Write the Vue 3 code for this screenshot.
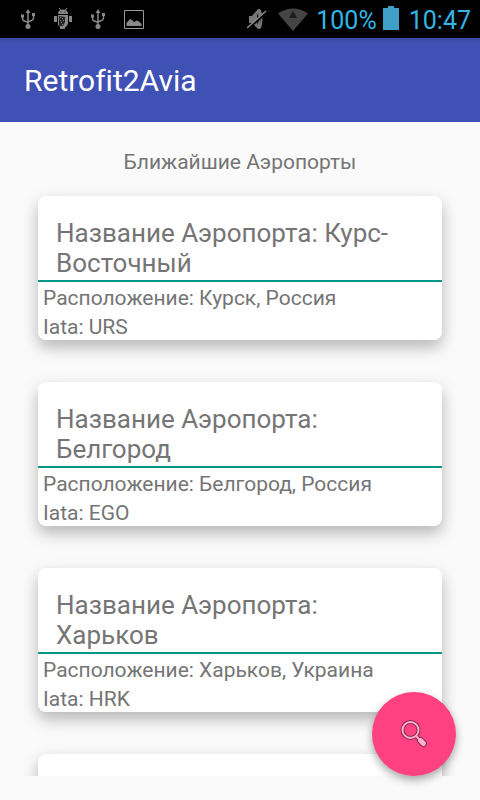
<script setup>
const airports = [
  { name: 'Курс-Восточный', place: 'Курск, Россия', iata: 'URS' },
  { name: 'Белгород', place: 'Белгород, Россия', iata: 'EGO' },
  { name: 'Харьков', place: 'Харьков, Украина', iata: 'HRK' }
]
</script>

<template>
  <div class="screen">
    <div class="status">
      <div class="notices">
        <svg v-for="n in 2" :key="n" :class="'usb-' + n" width="14" height="20" viewBox="0 0 14 20">
          <path d="M7 3v14M1.500 7v2.500q0 2 2 2.500l3.500 1.500M12.500 6v3q0 2-2 2.500L7 13" fill="none" stroke="#888" stroke-width="1.500" />
          <path d="M7 0l2.500 4h-5zM0 5.500h3v3H0zM11 4h3v3h-3z" fill="#888" />
          <circle cx="7" cy="17.500" r="2.500" fill="#888" />
        </svg>
        <svg class="droid" width="18" height="22" viewBox="0 0 18 22">
          <path d="M5 0l2 2.500M13 0l-2 2.500" stroke="#888" stroke-width="1" />
          <path d="M4 6q0-4.500 5-4.500t5 4.500zM4 7h10v9l-2 3h-1v2H6v-2l-2-2zM0 8h3v6H0zM15 8h3v6h-3z" fill="#888" />
          <path d="M6.500 3.500h1v1h-1zM10.500 3.500h1v1h-1zM5 8l6 1v5l-2 4H5z" fill="#222" />
          <path d="M6 9h1v1H6zM8 10h1v1H8zM6 12h1v1H6zM9 12h1v1H9zM7 14h1v1H7zM8 16h1v1H8z" fill="#888" />
        </svg>
        <svg class="photo" width="20" height="19" viewBox="0 0 20 19">
          <path d="M.5.5h19v18H.5z" fill="none" stroke="#999" />
          <path d="M2.500 16v-3l3.500-4 2 1 2 2 3-1.500 2 1 2.500 2.500v2z" fill="#888" />
        </svg>
      </div>
      <div class="system">
        <svg class="mute" width="20" height="22" viewBox="0 0 20 22">
          <path d="M2 8h3l6-7h2v20h-2l-6-6H2z" fill="#777" />
          <path d="M13 2q3 9 0 18" fill="none" stroke="#777" stroke-width="2" />
          <path d="M10 5q4 6 0 12z" fill="#1a1a1a" />
          <path d="M1 21L19 5" stroke="#000" stroke-width="2" />
          <path d="M0 20L19 3" stroke="#888" stroke-width="1.500" />
        </svg>
        <svg width="30" height="23" viewBox="0 0 30 23">
          <path d="M0 5.500q15-10 30 0L15 23z" fill="#444" />
          <path d="M15 3l4 7h-8z" fill="#1c1c1c" />
        </svg>
        <span class="reading">100%</span>
        <svg class="battery" width="16" height="24" viewBox="0 0 16 24">
          <path d="M0 2h5V0h6v2h5v22H0z" fill="#409fc7" />
        </svg>
        <time class="reading">10:47</time>
      </div>
    </div>

    <header class="bar"><h1>Retrofit2Avia</h1></header>

    <main class="content">
      <p class="caption">Ближайшие Аэропорты</p>
      <div class="list">
        <article v-for="a in airports" :key="a.iata" class="card">
          <h2>Название Аэропорта: {{ a.name }}</h2>
          <p>Расположение: {{ a.place }}</p>
          <p>Iata: {{ a.iata }}</p>
        </article>
        <article class="card"></article>
      </div>
      <button class="fab" type="button">
        <svg width="28" height="28" viewBox="0 0 28 28">
          <path d="M16.500 16.500l3 3" stroke="#8d2850" stroke-width="4" />
          <path d="M20.500 20.500l3 3" stroke="#8d2850" stroke-width="7" stroke-linecap="round" />
          <circle cx="10.500" cy="10" r="8" fill="none" stroke="#8d2850" stroke-width="4" />
          <circle cx="10.500" cy="10" r="8" fill="none" stroke="#ffb0cb" stroke-width="2" />
          <path d="M16 16l4 4" stroke="#ffb0cb" stroke-width="2" />
          <path d="M20.500 20.500l3 3" stroke="#ffb0cb" stroke-width="5" stroke-linecap="round" />
        </svg>
      </button>
    </main>
  </div>
</template>

<style>
body {
  background: #fafafa;
}
</style>

<style scoped>
.screen {
  height: 100vh;
  display: flex;
  flex-direction: column;
  font-family: Roboto, sans-serif;
  color: #757575;
}
h1,
h2,
p {
  margin: 0;
  font-weight: 400;
}
.status {
  flex: none;
  height: 38px;
  padding: 0 9px 0 21px;
  display: flex;
  align-items: center;
  justify-content: space-between;
  background: #000;
  color: #33b5e5;
  font-size: 25px;
}
.notices,
.system {
  display: flex;
  align-items: center;
}
.notices {
  gap: 19px;
}
.usb-1 {
  order: 1;
}
.droid {
  order: 2;
}
.usb-2 {
  order: 3;
}
.photo {
  order: 4;
}
.system {
  gap: 8px;
}
.mute {
  margin-right: 3px;
}
.battery {
  margin: 0 2px 2px -2px;
}
.reading {
  padding-top: 2px;
}
.bar {
  flex: none;
  height: 84px;
  padding: 0 24px;
  display: flex;
  align-items: center;
  background: linear-gradient(#3949a3, #3f51b5 6px);
  color: #fff;
}
.bar h1 {
  padding-top: 2px;
  font-size: 30px;
  line-height: 36px;
  font-variant-ligatures: none;
}
.content {
  flex: 1;
  min-height: 0;
  padding: 24px;
  display: flex;
  flex-direction: column;
  position: relative;
}
.caption {
  padding-top: 2px;
  font-size: 21px;
  line-height: 28px;
  text-align: center;
}
.list {
  flex: 1;
  min-height: 0;
  overflow: hidden;
  padding: 20px 14px;
  display: flex;
  flex-direction: column;
  gap: 42px;
}
.card {
  flex: none;
  min-height: 144px;
  border-radius: 8px;
  background: #fff;
  box-shadow: 0 7px 16px rgba(0, 0, 0, 0.28);
}
.card h2 {
  padding: 22px 18px 2px;
  border-bottom: 2px solid #009688;
  font-size: 26px;
  line-height: 30px;
}
.card p {
  padding: 4px 5px 0;
  font-size: 21px;
  line-height: 25px;
}
.fab {
  position: absolute;
  right: 24px;
  bottom: 24px;
  width: 84px;
  height: 84px;
  padding: 0;
  display: flex;
  align-items: center;
  justify-content: center;
  border: 0;
  border-radius: 50%;
  background: #ff4081;
  box-shadow: 0 4px 9px rgba(0, 0, 0, 0.35);
}
</style>
